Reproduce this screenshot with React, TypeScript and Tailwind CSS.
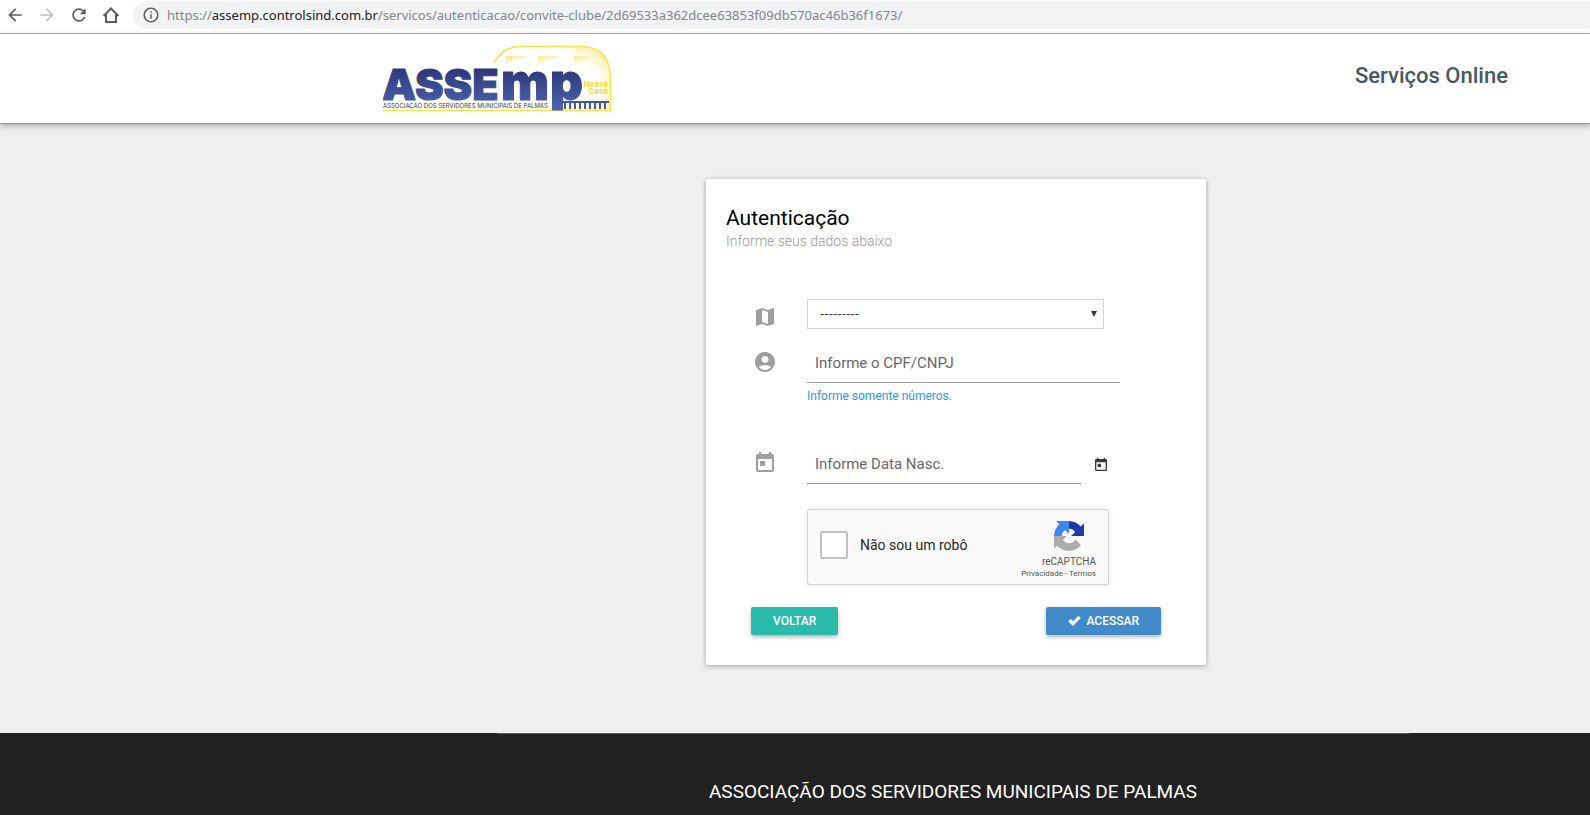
import { useState } from "react";
import type { ReactNode } from "react";
import {
  MdAccountCircle,
  MdArrowBack,
  MdArrowForward,
  MdInfoOutline,
  MdMap,
  MdRefresh,
  MdToday,
} from "react-icons/md";

const ROBOTO = "font-[Roboto,'Liberation_Sans',sans-serif]";

export default function App() {
  return (
    <div className={`min-h-screen flex flex-col bg-[#edeff1] ${ROBOTO}`}>
      <BrowserBar />
      <SiteHeader />
      <main className="flex justify-center pl-[322px] pt-[55px] pb-[68px]">
        <AuthCard />
      </main>
      <SiteFooter />
    </div>
  );
}

function BrowserBar() {
  return (
    <div className="flex items-start gap-3 h-[34px] pl-[5px] pt-px bg-white border-b border-[#b0b1b2] text-[#5a5d61]">
      <button type="button" aria-label="Voltar página" className="h-7">
        <MdArrowBack size={20} />
      </button>
      <button type="button" aria-label="Avançar página" className="h-7 text-[#bcbdbf]">
        <MdArrowForward size={20} />
      </button>
      <button type="button" aria-label="Recarregar" className="h-7">
        <MdRefresh size={20} />
      </button>
      <button type="button" aria-label="Página inicial" className="h-7">
        <HomeIcon />
      </button>
      <div className="flex-1 flex items-center gap-[7px] h-7 pl-[9px] rounded-l-full bg-[#f1f3f4]">
        <MdInfoOutline size={18} className="shrink-0" />
        <span className="text-[13px] leading-5 whitespace-nowrap text-[#80868b] font-['Noto_Sans','Open_Sans',sans-serif]">
          https://
          <span className="text-[#202124]">assemp.controlsind.com.br</span>
          /servicos/autenticacao/convite-clube/2d69533a362dcee63853f09db570ac46b36f1673/
        </span>
      </div>
    </div>
  );
}

function SiteHeader() {
  return (
    <header className="relative flex items-start justify-between h-[90px] pl-[383px] pr-[82px] bg-white border-b border-[#8f9b9e] shadow-[0_2px_6px_rgba(0,0,0,0.3)]">
      <a href="#" aria-label="ASSEMP" className="mt-[11px]">
        <Logo />
      </a>
      <h2 className="mt-[26px] text-[22px] leading-8 font-medium text-[#455a64]">
        Serviços Online
      </h2>
    </header>
  );
}

function AuthCard() {
  const [plan, setPlan] = useState("");
  return (
    <section className="w-full max-w-[500px] pt-[25px] pb-[30px] rounded-[2px] bg-white shadow-[0_1px_5px_rgba(0,0,0,0.35)]">
      <div className="px-5">
        <h1 className="text-[21px] leading-7 text-black">Autenticação</h1>
        <p className="-mt-px text-[14px] leading-5 font-light text-[#9a9a9a]">
          Informe seus dados abaixo
        </p>
      </div>

      <form className="px-[45px] pt-12" onSubmit={(e) => e.preventDefault()}>
        <Field icon={<MdMap size={24} className="mt-1.5" />}>
          <div className="relative w-[297px]">
            <select
              aria-label="Convênio"
              value={plan}
              onChange={(e) => setPlan(e.target.value)}
              className="block w-full h-[30px] pl-3 appearance-none bg-white border border-[#d5d5d5] text-[13px] text-[#393939] font-['Liberation_Sans',sans-serif]"
            >
              <option value="">---------</option>
            </select>
            <svg
              viewBox="0 0 6 6"
              className="absolute right-[7px] top-3 w-1.5 h-1.5 pointer-events-none"
            >
              <path d="M0 0h6L3 6z" fill="#393939" />
            </svg>
          </div>
        </Field>

        <Field className="mt-[17px]" icon={<MdAccountCircle size={24} className="mt-1" />}>
          <input
            type="text"
            aria-label="CPF/CNPJ"
            placeholder="Informe o CPF/CNPJ"
            className="block w-[313px] h-[37px] px-2 pb-0.5 border-b border-[#9e9e9e] text-[15px] outline-none placeholder:text-[#686868]"
          />
          <p className="mt-1 text-[12px] leading-[18px] text-[#2f94f3]">
            Informe somente números.
          </p>
        </Field>

        <Field className="mt-[42px]" icon={<MdToday size={24} className="mt-1" />}>
          <div className="flex items-center gap-3">
            <input
              type="text"
              aria-label="Data de nascimento"
              placeholder="Informe Data Nasc."
              className="block w-[274px] h-[37px] px-2 pb-0.5 border-b border-[#9e9e9e] text-[15px] outline-none placeholder:text-[#686868]"
            />
            <button type="button" aria-label="Abrir calendário" className="pb-0.5 text-[#393939]">
              <MdToday size={16} />
            </button>
          </div>
        </Field>

        <Recaptcha />

        <div className="flex justify-between mt-[22px]">
          <button
            type="button"
            className="h-7 px-[22px] rounded-[2px] bg-[#2bbbad] text-[12px] font-medium text-white shadow-[0_2px_4px_rgba(0,0,0,0.3)]"
          >
            VOLTAR
          </button>
          <button
            type="submit"
            className="flex items-center gap-[5px] h-7 px-[22px] rounded-[2px] bg-[#428bca] text-[12px] font-medium text-white shadow-[0_2px_4px_rgba(0,0,0,0.3)]"
          >
            <CheckIcon />
            ACESSAR
          </button>
        </div>
      </form>
    </section>
  );
}

function Field({
  icon,
  className = "",
  children,
}: {
  icon: ReactNode;
  className?: string;
  children: ReactNode;
}) {
  return (
    <div className={`flex items-start ${className}`}>
      <div className="shrink-0 w-14 pl-0.5 text-[#9e9e9e]">{icon}</div>
      <div className="min-w-0">{children}</div>
    </div>
  );
}

function Recaptcha() {
  return (
    <div className="flex justify-between w-[302px] h-[76px] mt-[25px] ml-14 px-3 rounded-[3px] border border-[#d3d3d3] bg-[#f9f9f9] shadow-[0_0_4px_1px_rgba(0,0,0,0.08)]">
      <label className="flex items-center gap-3 pb-1 text-[14px] text-[#282828]">
        <input
          type="checkbox"
          className="w-7 h-7 appearance-none rounded-[2px] border-2 border-[#c1c1c1] bg-white"
        />
        Não sou um robô
      </label>
      <div className="flex flex-col items-end pt-[11px] text-[#555]">
        <div className="flex flex-col items-center">
          <RecaptchaLogo />
          <span className="mt-[5px] text-[10px] leading-3">reCAPTCHA</span>
        </div>
        <div className="text-[8px] leading-3">
          <a href="#">Privacidade</a> - <a href="#">Termos</a>
        </div>
      </div>
    </div>
  );
}

function SiteFooter() {
  return (
    <footer className="flex-1 flex flex-col items-center pl-[316px] bg-[#212121] text-white">
      <div className="w-[912px] h-px bg-[#585858]" />
      <h3 className="mt-11 pb-6 text-[19px] leading-7">
        ASSOCIAÇÃO DOS SERVIDORES MUNICIPAIS DE PALMAS
      </h3>
    </footer>
  );
}

function Logo() {
  return (
    <svg width="230" height="68" viewBox="0 0 230 68" role="img" aria-label="ASSEMP Nossa Casa">
      <defs>
        <linearGradient id="blue" x1="0" y1="26" x2="0" y2="62" gradientUnits="userSpaceOnUse">
          <stop offset="0" stopColor="#2f3a7c" />
          <stop offset="1" stopColor="#4a62ac" />
        </linearGradient>
        <linearGradient id="pane" x1="0" y1="0" x2="0.6" y2="1">
          <stop offset="0" stopColor="#fbe98a" />
          <stop offset="0.8" stopColor="#fffdf0" />
        </linearGradient>
        <radialGradient id="glow" cx="190" cy="42" r="48" gradientUnits="userSpaceOnUse">
          <stop offset="0.55" stopColor="#ffffff" />
          <stop offset="1" stopColor="#fcec9c" />
        </radialGradient>
      </defs>
      <path d="M190 2H200Q227 3 227 33V65H197V20Z" fill="url(#glow)" />
      <path d="M123 11H148Q132 14 123 20Z" fill="url(#pane)" />
      <path d="M155 11H180Q164 14 155 20Z" fill="url(#pane)" />
      <path d="M191 11H205Q209 15 209 19L191 20Z" fill="url(#pane)" />
      <path
        d="M111 18Q120 1 138 1.500H198Q227 2 227.500 33V65.500H0"
        fill="none"
        stroke="#fbe14b"
        strokeWidth="1.500"
      />
      <g
        fill="url(#blue)"
        stroke="url(#blue)"
        strokeLinejoin="round"
        className="font-black font-[Inter,sans-serif]"
      >
        <text x="-1" y="55" fontSize="43">ASSE</text>
        <text x="118" y="55" fontSize="51">m</text>
        <text x="167" y="55" fontSize="51">p</text>
      </g>
      <text x="0" y="63" fontSize="6" fill="#3c3c3c" className="font-[Inter,sans-serif]">
        ASSOCIAÇÃO DOS SERVIDORES MUNICIPAIS DE PALMAS
      </text>
      <g
        fill="#fbdd3a"
        fontSize="8"
        textAnchor="end"
        className="font-bold font-[Inter,sans-serif]"
      >
        <text x="225" y="42">Nossa</text>
        <text x="225" y="49">Casa</text>
      </g>
      <g stroke="#4056a0" fill="none">
        <path d="M179 57H226" strokeWidth="2" />
        <path
          d="M182 58V64M187 58V64M192 58V64M197 58V64M202 58V64M207 58V64M212 58V64M217 58V64M222 58V64"
          strokeWidth="2"
        />
      </g>
    </svg>
  );
}

function HomeIcon() {
  return (
    <svg width="20" height="20" viewBox="0 0 20 20" fill="none" stroke="currentColor" strokeWidth="2">
      <path d="M2.500 11 10 3.500 17.500 11M5 9.500V17H15V9.500" />
    </svg>
  );
}

function CheckIcon() {
  return (
    <svg width="13" height="12" viewBox="0 0 13 12">
      <path d="M0.300 6.400 2.700 4.100 5 6.300 10.400 0.800 12.800 3.100 5 11Z" fill="currentColor" />
    </svg>
  );
}

function RecaptchaLogo() {
  return (
    <svg width="30" height="30" viewBox="0 0 64 64">
      <path
        fill="#1c3aa9"
        d="M64 31.955l-.033-1.370V4.687l-7.160 7.160C50.948 4.674 42.033.093 32.050.093c-10.400 0-19.622 4.960-25.458 12.640l11.736 11.860a15.550 15.550 0 0 1 4.754-5.334c2.050-1.600 4.952-2.906 8.968-2.906.485 0 .860.057 1.135.163 4.976.393 9.288 3.140 11.828 7.124l-8.307 8.307L64 31.953"
      />
      <path
        fill="#4285f4"
        d="M31.862.094l-1.370.033H4.594l7.160 7.160C4.580 13.147 0 22.060 0 32.046c0 10.400 4.960 19.622 12.640 25.458L24.500 45.768a15.550 15.550 0 0 1-5.334-4.754c-1.600-2.050-2.906-4.952-2.906-8.968 0-.485.057-.860.163-1.135.393-4.976 3.140-9.288 7.124-11.828l8.307 8.307L31.860.095"
      />
      <path
        fill="#ababab"
        d="M.001 32.045l.033 1.370v25.898l7.160-7.160c5.860 7.173 14.774 11.754 24.760 11.754 10.400 0 19.622-4.960 25.458-12.640l-11.736-11.860a15.550 15.550 0 0 1-4.754 5.334c-2.050 1.600-4.952 2.906-8.968 2.906-.485 0-.860-.057-1.135-.163-4.976-.393-9.288-3.140-11.828-7.124l8.307-8.307c-10.522.040-22.400.066-27.295-.005"
      />
    </svg>
  );
}
